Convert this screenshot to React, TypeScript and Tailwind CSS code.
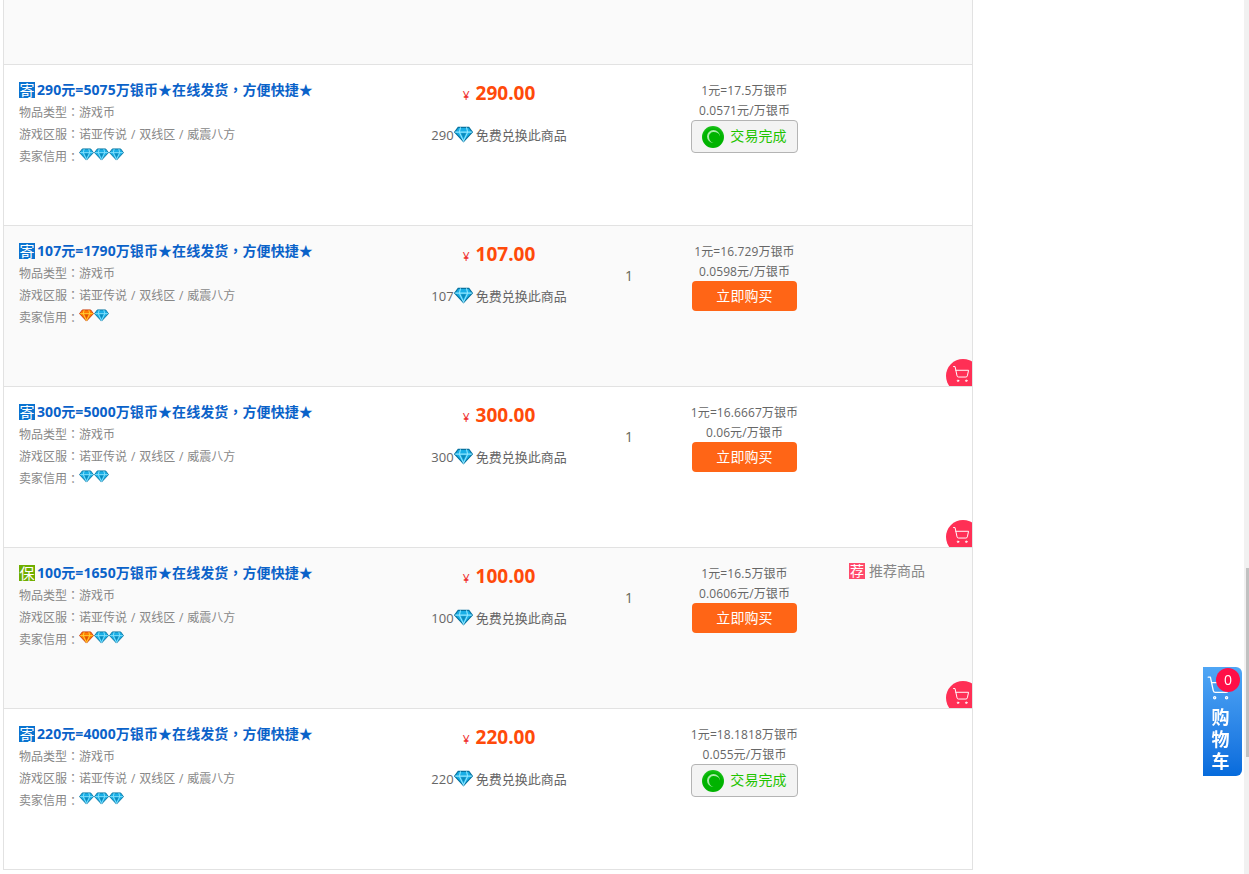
import React from "react";
import { ShoppingCart } from "lucide-react";

type Item = {
  badge: string;
  price: string;
  head: string;
  tail: string;
  credit: string[];
  rate: string;
  unit: string;
  stock?: boolean;
  recommend?: boolean;
};

const items: Item[] = [
  { badge: "寄", price: "290", head: "290元=5075万银币★在线发货", tail: "方便快捷★", credit: ["b", "b", "b"], rate: "1元=17.5万银币", unit: "0.0571元/万银币" },
  { badge: "寄", price: "107", head: "107元=1790万银币★在线发货", tail: "方便快捷★", credit: ["o", "b"], rate: "1元=16.729万银币", unit: "0.0598元/万银币", stock: true },
  { badge: "寄", price: "300", head: "300元=5000万银币★在线发货", tail: "方便快捷★", credit: ["b", "b"], rate: "1元=16.6667万银币", unit: "0.06元/万银币", stock: true },
  { badge: "保", price: "100", head: "100元=1650万银币★在线发货", tail: "方便快捷★", credit: ["o", "b", "b"], rate: "1元=16.5万银币", unit: "0.0606元/万银币", stock: true, recommend: true },
  { badge: "寄", price: "220", head: "220元=4000万银币★在线发货", tail: "方便快捷★", credit: ["b", "b", "b"], rate: "1元=18.1818万银币", unit: "0.055元/万银币" },
];

// centered full-width punctuation, the TC font draws it that way
function Punct({ children }: { children: string }) {
  return <span className="font-['Noto_Sans_CJK_TC'] leading-none">{children}</span>;
}

function Diamond({ kind, big }: { kind: string; big?: boolean }) {
  const main = kind === "o" ? "#ff7a00" : "#18aee6";
  const light = kind === "o" ? "#ffd83c" : "#8fe6ff";
  const edge = kind === "o" ? "#c8380a" : "#07729f";
  return (
    <svg viewBox="0 0 16 14" className={big ? "w-[19px] h-[17px]" : "w-[15px] h-[13px]"}>
      <path d="M3.5 1h9L15.5 5 8 13 .5 5z" fill={main} stroke={edge} strokeWidth="1" />
      <path d="M1 5h14M5.5 1 4.5 5 8 12.5l3.5-7.5-1-4" fill="none" stroke={light} strokeWidth=".9" />
      <path d="M6 6h4L8 10z" fill={edge} opacity=".6" />
    </svg>
  );
}

function Row({ item, alt }: { item: Item; alt: boolean }) {
  return (
    <div className={`relative grid grid-cols-[415px_160px_100px_131px_1fr] h-[161px] border-b border-[#e2e2e2] overflow-hidden ${alt ? "bg-[#fafafa]" : "bg-white"}`}>
      <div className="pl-[15px] pt-[14px] text-xs leading-[22px] text-[#888888]">
        <div className="flex items-center h-[22px]">
          <span className={`flex items-center justify-center w-4 h-4 mr-[2px] text-[15px] leading-none font-normal text-white ${item.badge === "保" ? "bg-[#6fae00]" : "bg-[#0a73d0]"}`}>
            {item.badge}
          </span>
          <span className="text-[14px] font-bold text-[#0a62c9] whitespace-nowrap tracking-[0.08px]">
            {item.head}
            <Punct>，</Punct>
            {item.tail}
          </span>
        </div>
        <div className="h-[22px] mt-[1px]">
          物品类型<Punct>：</Punct>游戏币
        </div>
        <div className="h-[22px] whitespace-nowrap [word-spacing:0.75px]">
          游戏区服<Punct>：</Punct>诺亚传说 / 双线区 / 威震八方
        </div>
        <div className="flex items-center h-[22px]">
          卖家信用<Punct>：</Punct>
          <span className="flex -mt-[5px]">
            {item.credit.map((c, i) => (
              <Diamond key={i} kind={c} />
            ))}
          </span>
        </div>
      </div>

      <div className="flex flex-col items-center pt-[14px]">
        <div className="flex items-baseline h-[28px] leading-[28px]">
          <span className="text-xs text-[#f03030] mr-[6px]">¥</span>
          <span className="text-[19px] font-bold text-[#ff4a0a]">{item.price}.00</span>
        </div>
        <div className="flex items-center mt-[19px] text-[13px] text-[#666666] whitespace-nowrap">
          {item.price}
          <span className="-mt-[3px]">
            <Diamond kind="b" big />
          </span>
          <span className="ml-[3px]">免费兑换此商品</span>
        </div>
      </div>

      <div className="pt-[39px] text-center text-sm leading-[21px] text-[#666655]">{item.stock ? "1" : ""}</div>

      <div className="flex flex-col items-center pt-[15px] text-xs text-[#666666] tracking-[0.1px]">
        <div className="h-[20px] leading-[21px] whitespace-nowrap">{item.rate}</div>
        <div className="h-[20px] leading-[21px] whitespace-nowrap">{item.unit}</div>
        {item.stock ? (
          <button className="w-[105px] h-[30px] rounded bg-[#ff6516] text-white text-[14px]">立即购买</button>
        ) : (
          <button className="flex items-center justify-center gap-[6px] w-[107px] h-[33px] rounded border border-[#b4b4b4] bg-[#f3f3f3] text-[14px] text-[#1fc400]">
            <span className="flex items-center justify-center w-[22px] h-[22px] rounded-full bg-[radial-gradient(circle_at_50%_60%,#00b300_55%,#3fd43f_100%)]">
              <span className="w-[13px] h-[13px] rounded-full border-l-2 border-t-2 border-[#a8eca8]" />
            </span>
            交易完成
          </button>
        )}
      </div>

      <div className="pl-[39px] pt-[14px] text-[14px] text-[#888888]">
        {item.recommend && (
          <div className="flex items-center h-[18px] leading-[16px]">
            <span className="flex items-center justify-center w-4 h-4 mr-1 bg-[#ff4a6b] text-[14px] leading-none text-white">荐</span>
            <span className="-mt-[1px]">推荐商品</span>
          </div>
        )}
      </div>

      {item.stock && (
        <div className="absolute right-[-8px] bottom-[-7px] flex items-center justify-center w-[34px] h-[34px] rounded-full bg-[#ff2f55] text-white">
          <ShoppingCart size={18} strokeWidth={1.3} className="mr-1 mb-1" />
        </div>
      )}
    </div>
  );
}

export default function App() {
  return (
    <div
      className="relative w-full h-[874px] overflow-hidden bg-white"
      style={{ fontFamily: '"Open Sans", "Noto Sans CJK SC", sans-serif' }}
    >
      <div className="ml-[3px] w-[970px] border-x border-[#e2e2e2]">
        <div className="h-[65px] bg-[#fafafa] border-b border-[#e2e2e2]" />
        {items.map((item, i) => (
          <Row key={i} item={item} alt={i % 2 === 1} />
        ))}
      </div>

      {/* scrollbar */}
      <div className="absolute top-0 right-0 w-[5px] h-full bg-[#f1f1f1]">
        <div className="absolute left-[2px] top-[568px] w-[3px] h-[189px] bg-[#c1c1c1]" />
      </div>

      {/* floating cart */}
      <div className="fixed left-[1203px] top-[667px] w-[39px] h-[109px] rounded-r-[6px] bg-gradient-to-b from-[#4fa6f5] to-[#056bdc] text-white">
        <ShoppingCart size={26} strokeWidth={1.2} className="absolute left-[3px] top-[8px]" />
        <div className="absolute left-[13px] top-[1px] flex items-center justify-center w-6 h-6 rounded-full bg-[#ff0f47] text-sm">0</div>
        <div className="absolute left-0 right-[4px] top-[39px] flex flex-col items-center text-[18px] leading-[22px] font-bold">
          <span>购</span>
          <span>物</span>
          <span>车</span>
        </div>
      </div>
    </div>
  );
}
